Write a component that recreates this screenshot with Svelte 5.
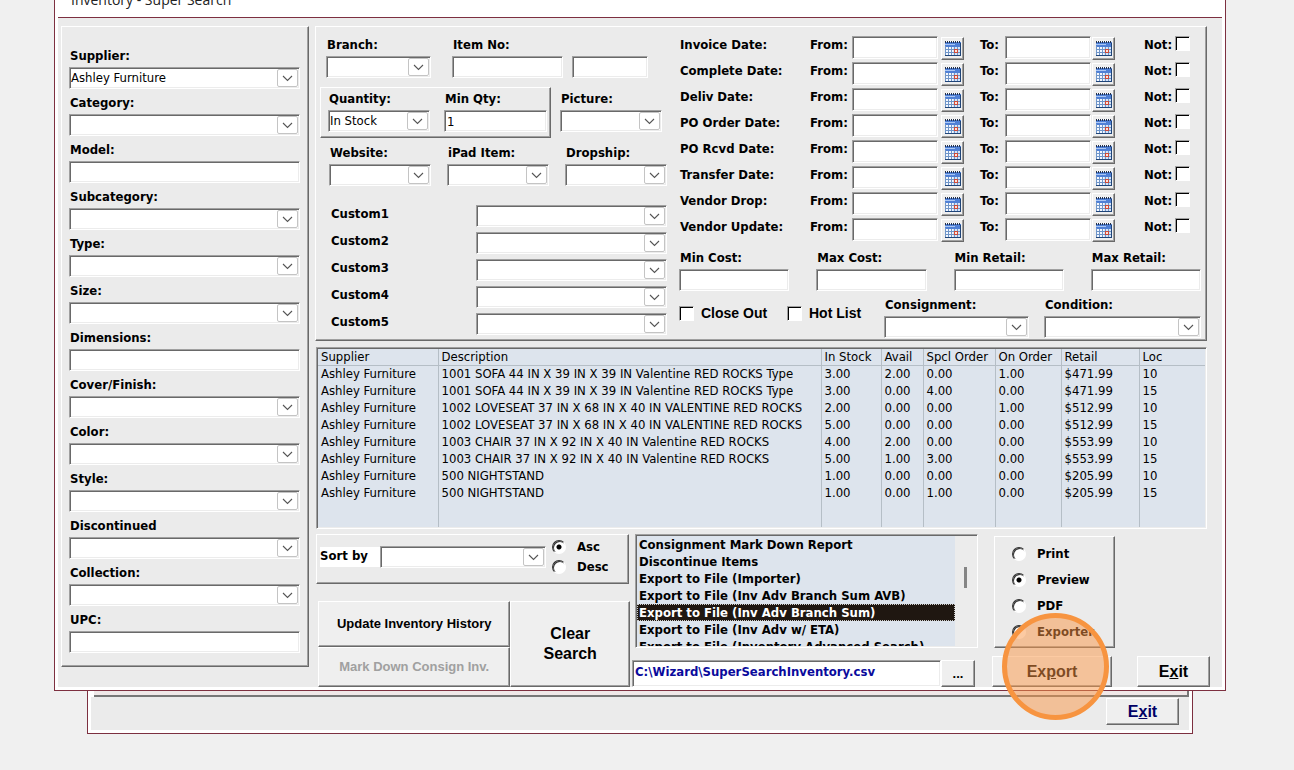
<script>
  const filters = [
    { label: 'Supplier:', combo: true, value: 'Ashley Furniture' },
    { label: 'Category:', combo: true },
    { label: 'Model:' },
    { label: 'Subcategory:', combo: true },
    { label: 'Type:', combo: true },
    { label: 'Size:', combo: true },
    { label: 'Dimensions:' },
    { label: 'Cover/Finish:', combo: true },
    { label: 'Color:', combo: true },
    { label: 'Style:', combo: true },
    { label: 'Discontinued', combo: true },
    { label: 'Collection:', combo: true },
    { label: 'UPC:' }
  ];
  const customs = ['Custom1', 'Custom2', 'Custom3', 'Custom4', 'Custom5'];
  const dates = [
    'Invoice Date:', 'Complete Date:', 'Deliv Date:', 'PO Order Date:',
    'PO Rcvd Date:', 'Transfer Date:', 'Vendor Drop:', 'Vendor Update:'
  ];
  const prices = ['Min Cost:', 'Max Cost:', 'Min Retail:', 'Max Retail:'];
  const columns = [
    ['Supplier', 'c-supplier'], ['Description', 'c-desc'], ['In Stock', 'c-stock'], ['Avail', 'c-avail'],
    ['Spcl Order', 'c-spcl'], ['On Order', 'c-order'], ['Retail', 'c-retail'], ['Loc', 'c-loc']
  ];
  const sofa = '1001 SOFA 44 IN X 39 IN X 39 IN Valentine RED ROCKS Type';
  const loveseat = '1002 LOVESEAT 37 IN X 68 IN X 40 IN VALENTINE RED ROCKS';
  const chair = '1003 CHAIR 37 IN X 92 IN X 40 IN Valentine RED ROCKS';
  const rows = [
    [sofa, '3.00', '2.00', '0.00', '1.00', '$471.99', '10'],
    [sofa, '3.00', '0.00', '4.00', '0.00', '$471.99', '15'],
    [loveseat, '2.00', '0.00', '0.00', '1.00', '$512.99', '10'],
    [loveseat, '5.00', '0.00', '0.00', '0.00', '$512.99', '15'],
    [chair, '4.00', '2.00', '0.00', '0.00', '$553.99', '10'],
    [chair, '5.00', '1.00', '3.00', '0.00', '$553.99', '15'],
    ['500 NIGHTSTAND', '1.00', '0.00', '0.00', '0.00', '$205.99', '10'],
    ['500 NIGHTSTAND', '1.00', '0.00', '1.00', '0.00', '$205.99', '15']
  ];
  const reports = [
    'Consignment Mark Down Report', 'Discontinue Items', 'Export to File (Importer)',
    'Export to File (Inv Adv Branch Sum AVB)', 'Export to File (Inv Adv Branch Sum)',
    'Export to File (Inv Adv w/ ETA)', 'Export to File (Inventory Advanced Search)'
  ];
  let report = $state(4);
  let sortDir = $state('Asc');
  let output = $state('Preview');
</script>

{#snippet combo(id, value = '')}
  <span class="combo sunken">
    <select {id}><option>{value}</option></select>
    <span class="arrow">
      <svg width="11" height="7" viewBox="0 0 11 7"><path d="M1 1l4.500 4.500L10 1" fill="none" stroke="#555" stroke-width="1.100" /></svg>
    </span>
  </span>
{/snippet}

{#snippet field(id, label, isCombo, value = '')}
  <div class="field">
    <label for={id}>{label}</label>
    {#if isCombo}
      {@render combo(id, value)}
    {:else}
      <input class="text sunken" {id} type="text" {value} />
    {/if}
  </div>
{/snippet}

{#snippet calendar(name)}
  <button class="cal raised" type="button" aria-label={name}>
    <svg width="16" height="15" viewBox="0 0 16 15" shape-rendering="crispEdges">
      <rect x="0" y="1" width="16" height="14" fill="#f4f8ff" />
      <rect x="8" y="6" width="7" height="8" fill="#d5e4f8" />
      <rect x="0" y="1" width="16" height="5" fill="#4f80d6" />
      <rect x="0" y="3" width="10" height="1" fill="#a9c6f3" />
      <path d="M.5 0v2M2.500 0v2M4.500 0v2M6.500 0v2M8.500 0v2M10.500 0v2M12.500 0v2M14.500 0v2" stroke="#26324a" />
      <path d="M1.500 0v1M3.500 0v1M5.500 0v1M7.500 0v1M9.500 0v1M11.500 0v1M13.500 0v1" stroke="#fff" />
      <path d="M.5 5v10M3.500 6v8M6.500 6v8M9.500 6v8M12.500 6v8M0 8.500h15M0 11.500h15" stroke="#6f95c8" />
      <path d="M0 14.500h16M15.500 2v13" stroke="#1f4478" />
      <rect x="9.500" y="8.500" width="3" height="3" fill="#fbe3dc" stroke="#cf4a36" />
    </svg>
  </button>
{/snippet}

<main class="desktop">
  <section class="window">
    <header class="title">Inventory - Super Search</header>
    <div class="body">
      <aside class="panel filters">
        {#each filters as f, i}
          {@render field('filter' + i, f.label, f.combo, f.value)}
        {/each}
      </aside>

      <div class="work">
        <div class="panel criteria">
          <div class="basic">
            <div class="line first">
              <div class="w-branch">{@render field('branch', 'Branch:', true)}</div>
              <div class="w-item">{@render field('item', 'Item No:', false)}</div>
              <input class="text sunken suffix" type="text" aria-label="Item suffix" />
            </div>
            <div class="line second">
              <div class="panel qty">
                {@render field('quantity', 'Quantity:', true, 'In Stock')}
                {@render field('minqty', 'Min Qty:', false, '1')}
              </div>
              <div class="w-flag">{@render field('picture', 'Picture:', true)}</div>
            </div>
            <div class="line third">
              <div class="w-flag">{@render field('website', 'Website:', true)}</div>
              <div class="w-flag">{@render field('ipad', 'iPad Item:', true)}</div>
              <div class="w-flag">{@render field('dropship', 'Dropship:', true)}</div>
            </div>
            <div class="customs">
              {#each customs as c}
                <div class="custom"><label for={c}>{c}</label>{@render combo(c)}</div>
              {/each}
            </div>
          </div>

          <div class="extra">
            {#each dates as d, i}
              <div class="date">
                <span class="name">{d}</span>
                <label class="from" for={'from' + i}>From:</label>
                <input class="text sunken" id={'from' + i} type="text" />
                {@render calendar(d + ' from')}
                <label class="to" for={'to' + i}>To:</label>
                <input class="text sunken" id={'to' + i} type="text" />
                {@render calendar(d + ' to')}
                <label class="not" for={'not' + i}>Not:</label>
                <input class="check" id={'not' + i} type="checkbox" />
              </div>
            {/each}
            <div class="prices">
              {#each prices as p}{@render field(p, p, false)}{/each}
            </div>
            <div class="states">
              <label class="tick"><input class="check" type="checkbox" />Close Out</label>
              <label class="tick"><input class="check" type="checkbox" />Hot List</label>
              <div class="pair">
                {@render field('consign', 'Consignment:', true)}
                {@render field('condition', 'Condition:', true)}
              </div>
            </div>
          </div>
        </div>

        <div class="results sunken">
          <table>
            <colgroup>{#each columns as c}<col class={c[1]} />{/each}</colgroup>
            <thead><tr>{#each columns as c}<th>{c[0]}</th>{/each}</tr></thead>
            <tbody>
              {#each rows as r}
                <tr><td>Ashley Furniture</td>{#each r as cell}<td>{cell}</td>{/each}</tr>
              {/each}
              <tr class="rest">{#each columns as c}<td></td>{/each}</tr>
            </tbody>
          </table>
        </div>

        <div class="bottom">
          <div class="left">
            <div class="panel sort">
              <label class="sortby" for="sortby">Sort by</label>
              {@render combo('sortby')}
              <div class="dirs">
                {#each ['Asc', 'Desc'] as d}
                  <label class="opt"><input class="radio" type="radio" name="dir" value={d} bind:group={sortDir} />{d}</label>
                {/each}
              </div>
            </div>
            <div class="actions">
              <button class="btn raised" type="button">Update Inventory History</button>
              <button class="btn raised clear" type="button">Clear<br />Search</button>
              <button class="btn raised" type="button" disabled>Mark Down Consign Inv.</button>
            </div>
          </div>

          <div class="middle">
            <div class="list sunken">
              <ul role="listbox" aria-label="Reports">
                {#each reports as r, i}
                  <li role="option" aria-selected={i === report}>{r}</li>
                {/each}
              </ul>
              <div class="scroll"><span class="thumb"></span></div>
            </div>
            <div class="path">
              <input class="text sunken file" type="text" aria-label="Export file" value={'C:\\Wizard\\SuperSearchInventory.csv'} />
              <button class="btn raised browse" type="button">...</button>
            </div>
          </div>

          <div class="right">
            <div class="panel outputs">
              {#each ['Print', 'Preview', 'PDF', 'Exporter'] as o}
                <label class="opt"><input class="radio" type="radio" name="output" value={o} bind:group={output} />{o}</label>
              {/each}
            </div>
            <div class="ends">
              <button class="btn raised big export" type="button">Ex<u>p</u>ort<span class="spot"></span></button>
              <button class="btn raised big exit" type="button">E<u>x</u>it</button>
            </div>
          </div>
        </div>
      </div>
    </div>
  </section>

  <section class="window parent">
    <div class="edge"></div>
    <div class="foot"><button class="btn raised big navy" type="button">E<u>x</u>it</button></div>
  </section>
</main>

<style>
  :global(body) { margin: 0; background: #f0f0f0; }
  .desktop {
    font: 13px/16px "DejaVu Sans Condensed", "DejaVu Sans", sans-serif;
    color: #000;
    padding: 0 68px 36px 54px;
  }
  .desktop *, .desktop { box-sizing: border-box; }
  input, select, button { font: inherit; color: inherit; margin: 0; border-radius: 0; min-width: 0; }
  label, .name { font-weight: bold; white-space: nowrap; }

  .window { border: 1px solid #7d3040; border-top: 0; background: #fff; padding: 0 3px 3px; }
  .title {
    height: 18px; padding-left: 13px; border-bottom: 1px solid #7d3040;
    font: 14px/34px "Open Sans", sans-serif; color: #222;
    display: flex; align-items: flex-end; overflow: hidden;
  }
  .body { background: #ebebeb; padding: 8px 12px 0 3px; display: flex; gap: 6px; align-items: flex-start; }

  .panel {
    border: 1px solid; border-color: #fff #696969 #696969 #fff;
    box-shadow: inset -1px -1px #a0a0a0;
  }
  .sunken {
    border: 1px solid; border-color: #a0a0a0 #fff #fff #a0a0a0;
    box-shadow: inset 1px 1px #696969, inset -1px -1px #ececec;
  }
  .raised {
    border: 1px solid; border-color: #fff #696969 #696969 #fff;
    box-shadow: inset -1px -1px #a0a0a0;
    background: #efefef;
  }

  .field { display: flex; flex-direction: column; min-width: 0; }
  .field label { height: 19px; padding-left: 1px; }
  .text { width: 100%; height: 22px; background: #fff; padding: 0 2px; outline: 0; }
  .combo { display: grid; height: 22px; background: #fff; padding: 1px; min-width: 0; }
  .combo select {
    grid-area: 1 / 1; appearance: none; border: 0; background: transparent; width: 100%;
    padding: 0 22px 0 0; outline: 0;
  }
  .arrow {
    grid-area: 1 / 1; justify-self: end; width: 21px; pointer-events: none;
    border: 1px solid #c4c4c4; border-radius: 2px; display: grid; place-items: center;
  }

  .filters { flex: none; width: 248px; padding: 21px 8px 13px 7px; display: grid; gap: 6px; }

  .work { flex: 1; min-width: 0; }
  .criteria { display: grid; grid-template-columns: 347px minmax(0, 1fr); gap: 12px; margin-right: 3px; padding: 9px 5px 2px 4px; }
  .line { display: flex; }
  .first { padding: 1px 0 0 6px; }
  .w-branch { width: 105px; margin-right: 21px; }
  .w-item { width: 111px; margin-right: 9px; }
  .w-flag { width: 102px; }
  .suffix { width: 76px; align-self: flex-end; }
  .second { margin-top: 9px; gap: 9px; }
  .qty { display: grid; grid-template-columns: 102px 103px; gap: 14px; width: 231px; height: 51px; padding: 3px 0 0 7px; }
  .second .w-flag { padding-top: 4px; }
  .third { padding: 7px 0 0 9px; gap: 16px; }
  .customs { padding: 19px 0 0 9px; display: grid; gap: 5px; }
  .custom { display: grid; grid-template-columns: 147px 1fr; }
  .custom label { padding: 1px 0 0 2px; }

  .date { display: grid; grid-template-columns: 130px 43px minmax(0, 1fr) 26px 41px minmax(0, 1fr) 24px 60px 26px; height: 26px; }
  .date .text { height: 23px; }
  .date .name, .date label { padding: 1px 0 0 1px; }
  .date .to { padding-left: 16px; }
  .date .not { padding-left: 29px; }
  .cal { width: 23px; height: 23px; padding: 0; margin-top: 1px; justify-self: end; display: grid; place-items: center; }
  .check {
    appearance: none; width: 15px; height: 15px; background: #fff; flex: none;
    border: 1px solid; border-color: #a0a0a0 #fff #fff #a0a0a0;
    box-shadow: inset 1px 1px #000;
  }
  .prices { display: grid; grid-template-columns: repeat(4, minmax(0, 1fr)); gap: 27px; padding-top: 6px; }
  .states { display: grid; grid-template-columns: 108px 97px minmax(0, 1fr); padding-top: 6px; }
  .pair { display: grid; grid-template-columns: minmax(0, 145fr) minmax(0, 157fr); gap: 15px; }
  .tick { display: flex; align-items: center; gap: 7px; height: 15px; margin-top: 9px; font: bold 14px/15px "Liberation Sans", sans-serif; }

  .results { margin: 6px 3px 0 1px; background: #dde4ed; padding: 1px; }
  table { width: 100%; border-collapse: collapse; table-layout: fixed; }
  th, td { height: 17px; padding: 0 0 0 3px; text-align: left; font-weight: normal; line-height: 16px; white-space: nowrap; border-right: 1px solid #b5bec6; }
  th:last-child, td:last-child { border-right: 0; }
  th { height: 16px; line-height: 15px; border-bottom: 1px solid #b5bec6; }
  .rest td { height: 26px; }
  .c-supplier { width: 120px; } .c-stock { width: 60px; } .c-avail { width: 42px; }
  .c-spcl { width: 72px; } .c-order { width: 66px; } .c-retail { width: 78px; } .c-loc { width: 66px; }

  .bottom { display: grid; grid-template-columns: 314fr 346fr 230fr; column-gap: 2px; margin: 5px 0 0 1px; }
  .left, .middle, .right { min-width: 0; display: flex; flex-direction: column; justify-content: space-between; }
  .left { gap: 17px; }
  .sort { height: 50px; display: flex; align-items: flex-start; padding: 11px 2px 0 3px; margin-right: 1px; }
  .sortby { background: #fff; width: 60px; height: 20px; line-height: 18px; margin-top: 1px; }
  .sort :global(.combo) { flex: 1; }
  .dirs { display: grid; gap: 4px; width: 80px; padding-left: 6px; margin-top: -7px; }
  .opt { display: flex; align-items: center; gap: 11px; height: 16px; }
  .radio {
    appearance: none; width: 14px; height: 14px; border-radius: 50%; flex: none;
    border: 1px solid; border-color: #333 #fff #fff #333; background: #fff;
    box-shadow: inset 1px 1px #333;
  }
  .radio:checked { background: radial-gradient(circle at 50% 50%, #000 0 2px, #fff 3px); }
  .actions { margin-left: 2px; display: grid; grid-template: 46px 40px / 193fr 120fr; }
  .btn { font: bold 13px/16px "Liberation Sans", sans-serif; padding: 0; }
  .btn:disabled { color: #a0a0a0; }
  .clear { grid-area: 1 / 2 / 3 / 3; font-size: 16px; line-height: 20px; }

  .list { margin-left: 3px; height: 114px; background: #dde4ed; padding: 1px; display: flex; overflow: hidden; }
  ul { list-style: none; margin: 0; padding: 0; flex: 1; min-width: 0; overflow: hidden; font-weight: bold; }
  li { height: 17px; line-height: 17px; padding-left: 2px; white-space: nowrap; }
  li[aria-selected='true'] { background: #1f1711; color: #fff; outline: 1px dotted #ccc; outline-offset: -1px; }
  .scroll { width: 21px; background: #ececec; padding: 31px 0 0 9px; }
  .thumb { display: block; width: 3px; height: 21px; background: #858585; }
  .path { display: flex; }
  .path .file { flex: 1; height: 27px; padding: 0 2px 4px; font-weight: bold; color: #0a0a9c; }
  .browse { width: 34px; margin-right: 3px; }

  .right { padding-left: 12px; }
  .outputs { width: 121px; height: 112px; margin: 2px 0 0 2px; padding: 9px 0 0 17px; display: grid; gap: 10px; align-content: start; }
  .ends { display: flex; justify-content: space-between; }
  .big { height: 31px; width: 73px; font-size: 16px; }
  .big u { text-underline-offset: 1px; }
  .ends .export { width: 120px; position: relative; }
  .spot {
    position: absolute; width: 107px; height: 107px; left: 9px; top: -44px; border-radius: 50%;
    border: 5px solid #f79440; background: rgba(250, 150, 70, 0.5); pointer-events: none;
  }

  .parent { margin: 0 33px 0 33px; }
  .edge { height: 6px; margin-left: 3px; background: #efe8e8; border-bottom: 2px solid #777; border-right: 2px solid #777; }
  .foot { background: #ebebeb; display: flex; justify-content: flex-end; padding: 1px 10px 5px; }
  .navy { color: #000066; height: 27px; }
</style>
